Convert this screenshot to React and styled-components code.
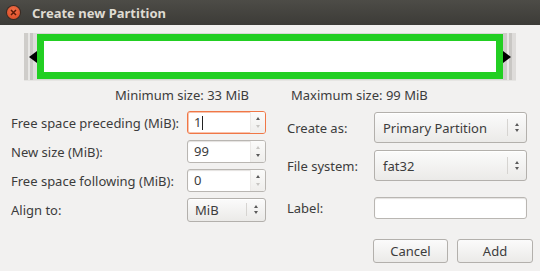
import React from "react";
import styled, { createGlobalStyle } from "styled-components";

const COLORS = {
  bg: "#f2f1f0",
  text: "#3c3c3c",
  border: "#b9b6b2",
  green: "#22cf22",
  focus: "#f07746",
};

const GlobalStyle = createGlobalStyle`
  html, body {
    margin: 0;
    padding: 0;
    background: ${COLORS.bg};
  }
  body {
    font-family: "Noto Sans", "Open Sans", sans-serif;
    font-size: 13px;
    color: ${COLORS.text};
  }
`;

const Window = styled.div`
  width: 540px;
  height: 271px;
  display: flex;
  flex-direction: column;
  background: ${COLORS.bg};
  overflow: hidden;
`;

const TitleBar = styled.div`
  height: 25px;
  flex: none;
  display: flex;
  align-items: center;
  gap: 12px;
  padding-left: 7px;
  background: linear-gradient(#4d4c47, #3c3b37);
  color: #dfdbd2;
  font-weight: 700;
  font-size: 13px;
`;

const CloseButton = styled.span`
  width: 13px;
  height: 13px;
  border-radius: 50%;
  background: radial-gradient(circle at 50% 35%, #f0704a, #d9461f);
  box-shadow: 0 0 0 1px #3a2a22;
  display: flex;
  align-items: center;
  justify-content: center;
`;

const Body = styled.div`
  flex: 1;
  display: flex;
  flex-direction: column;
`;

const PartitionBar = styled.div`
  margin: 8px 24px 0 24px;
  height: 47px;
  display: flex;
  background: #d9d8d6;
  border-bottom: 1px solid #e6e5e3;
`;

const Handle = styled.div`
  width: 13px;
  flex: none;
  position: relative;
  background: linear-gradient(
    90deg,
    #cfcdca 0 4px,
    #e8e7e5 4px 6px,
    #c9c7c4 6px 9px,
    #dedcda 9px
  );
`;

const Arrow = styled.span`
  position: absolute;
  top: 18px;
  width: 0;
  height: 0;
  border-top: 6px solid transparent;
  border-bottom: 6px solid transparent;
  ${(p) =>
    p.$dir === "left"
      ? `right: 0; border-right: 8px solid #000;`
      : `left: 0; border-left: 8px solid #000;`}
`;

const Block = styled.div`
  flex: 1;
  margin: 1px 0 1px 0;
  border: 7px solid ${COLORS.green};
  background: #ffffff;
`;

const SizeInfo = styled.div`
  display: flex;
  gap: 42px;
  padding-left: 115px;
  margin-top: 6px;
  line-height: 16px;
`;

const Form = styled.div`
  display: flex;
  margin-top: 8px;
`;

const LeftGrid = styled.div`
  display: grid;
  grid-template-columns: 176px 79px;
  grid-auto-rows: 23px;
  row-gap: 6px;
  padding-left: 11px;
  align-items: center;
  align-content: start;
`;

const RightPanel = styled.div`
  margin-left: 21px;
  display: flex;
  flex-direction: column;
`;

const Row = styled.div`
  display: grid;
  grid-template-columns: 87px 153px;
  align-items: center;
  margin-top: ${(p) => p.$mt || 0}px;
`;

const Label = styled.span`
  white-space: nowrap;
`;

const SpinBox = styled.div`
  height: 23px;
  box-sizing: border-box;
  display: flex;
  border: 1px solid ${(p) => (p.$focused ? COLORS.focus : COLORS.border)};
  border-radius: 3px;
  background: #fff;
  box-shadow: ${(p) => (p.$focused ? "inset 0 0 0 1px #f8c3ad" : "inset 0 1px 1px #e4e2df")};
`;

const SpinText = styled.span`
  flex: 1;
  padding-left: 6px;
  line-height: 21px;
  display: flex;
  align-items: center;
`;

const Caret = styled.span`
  width: 1px;
  height: 14px;
  background: #222;
  margin-left: 1px;
`;

const SpinButtons = styled.div`
  width: 14px;
  display: flex;
  flex-direction: column;
  align-items: center;
  justify-content: center;
  gap: 5px;
  background: linear-gradient(#fbfbfa, #efeeec);
  border-left: 1px solid #ebe9e7;
  border-radius: 0 2px 2px 0;
`;

const Tri = styled.span`
  width: 0;
  height: 0;
  border-left: 2.5px solid transparent;
  border-right: 2.5px solid transparent;
  ${(p) =>
    p.$up
      ? `border-bottom: 3px solid ${p.$off ? "#c8c6c3" : "#5a5a5a"};`
      : `border-top: 3px solid ${p.$off ? "#c8c6c3" : "#5a5a5a"};`}
`;

const Combo = styled.div`
  height: ${(p) => p.$h}px;
  box-sizing: border-box;
  display: flex;
  align-items: center;
  border: 1px solid #b3b0ac;
  border-radius: 3px;
  background: linear-gradient(#fbfbfb, #ebeae8);
  box-shadow: 0 1px 0 #fff inset;
`;

const ComboText = styled.span`
  flex: 1;
  padding-left: ${(p) => p.$pad || 8}px;
`;

const ComboSep = styled.span`
  width: 1px;
  height: 60%;
  background: #d6d4d1;
`;

const ComboArrows = styled.div`
  width: 18px;
  display: flex;
  flex-direction: column;
  align-items: center;
  gap: 3px;
`;

const Entry = styled.div`
  height: 22px;
  box-sizing: border-box;
  border: 1px solid ${COLORS.border};
  border-radius: 3px;
  background: #fff;
  box-shadow: inset 0 1px 1px #e4e2df;
`;

const Buttons = styled.div`
  display: flex;
  gap: 9px;
  margin-top: 20px;
  margin-left: 86px;
`;

const Button = styled.button`
  width: ${(p) => p.$w}px;
  height: 24px;
  font: inherit;
  color: ${COLORS.text};
  border: 1px solid #b3b0ac;
  border-radius: 3px;
  background: linear-gradient(#fbfbfb, #ebeae8);
  padding: 0;
`;

const Spin = ({ value, focused, upOff, downOff }) => (
  <SpinBox $focused={focused}>
    <SpinText>
      {value}
      {focused && <Caret />}
    </SpinText>
    <SpinButtons>
      <Tri $up $off={upOff} />
      <Tri $off={downOff} />
    </SpinButtons>
  </SpinBox>
);

const Select = ({ value, h = 23, pad }) => (
  <Combo $h={h}>
    <ComboText $pad={pad}>{value}</ComboText>
    <ComboSep />
    <ComboArrows>
      <Tri $up />
      <Tri />
    </ComboArrows>
  </Combo>
);

export default function App() {
  return (
    <Window>
      <GlobalStyle />
      <TitleBar>
        <CloseButton>
          <svg width="7" height="7" viewBox="0 0 7 7">
            <path d="M1 1L6 6M6 1L1 6" stroke="#5a1a08" strokeWidth="1.5" />
          </svg>
        </CloseButton>
        Create new Partition
      </TitleBar>
      <Body>
        <PartitionBar>
          <Handle>
            <Arrow $dir="left" />
          </Handle>
          <Block />
          <Handle>
            <Arrow $dir="right" />
          </Handle>
        </PartitionBar>
        <SizeInfo>
          <span>Minimum size: 33 MiB</span>
          <span>Maximum size: 99 MiB</span>
        </SizeInfo>
        <Form>
          <LeftGrid>
            <Label>Free space preceding (MiB):</Label>
            <Spin value="1" focused downOff />
            <Label>New size (MiB):</Label>
            <Spin value="99" upOff />
            <Label>Free space following (MiB):</Label>
            <Spin value="0" downOff />
            <Label>Align to:</Label>
            <Select value="MiB" h={24} pad={7} />
          </LeftGrid>
          <RightPanel>
            <Row $mt={1}>
              <Label>Create as:</Label>
              <Select value="Primary Partition" h={31} />
            </Row>
            <Row $mt={7}>
              <Label>File system:</Label>
              <Select value="fat32" h={31} />
            </Row>
            <Row $mt={16}>
              <Label>Label:</Label>
              <Entry />
            </Row>
            <Buttons>
              <Button $w={75}>Cancel</Button>
              <Button $w={76}>Add</Button>
            </Buttons>
          </RightPanel>
        </Form>
      </Body>
    </Window>
  );
}
